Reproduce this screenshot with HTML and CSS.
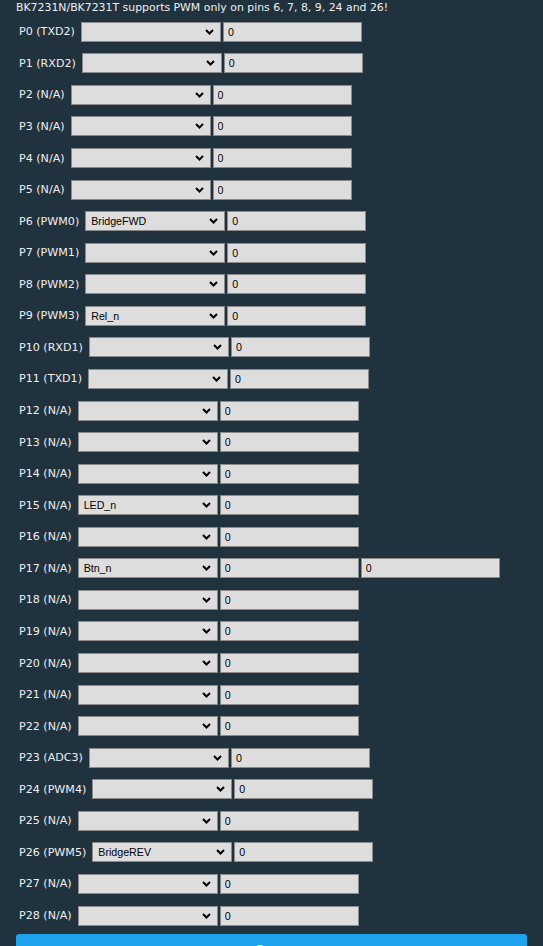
FILE: index.html
```html
<!DOCTYPE html>
<html>
<head>
<meta charset="utf-8">
<link rel="stylesheet" href="styles.css">
</head>
<body>
<div class="page">
  <div class="note">BK7231N/BK7231T supports PWM only on pins 6, 7, 8, 9, 24 and 26!</div>
  <div class="pins">
    <div class="row"><span class="lbl">P0 (TXD2)</span><select class="sel"><option></option></select><input class="inp" value="0"></div>
    <div class="row"><span class="lbl">P1 (RXD2)</span><select class="sel"><option></option></select><input class="inp" value="0"></div>
    <div class="row"><span class="lbl">P2 (N/A)</span><select class="sel"><option></option></select><input class="inp" value="0"></div>
    <div class="row"><span class="lbl">P3 (N/A)</span><select class="sel"><option></option></select><input class="inp" value="0"></div>
    <div class="row"><span class="lbl">P4 (N/A)</span><select class="sel"><option></option></select><input class="inp" value="0"></div>
    <div class="row"><span class="lbl">P5 (N/A)</span><select class="sel"><option></option></select><input class="inp" value="0"></div>
    <div class="row"><span class="lbl">P6 (PWM0)</span><select class="sel"><option>BridgeFWD</option></select><input class="inp" value="0"></div>
    <div class="row"><span class="lbl">P7 (PWM1)</span><select class="sel"><option></option></select><input class="inp" value="0"></div>
    <div class="row"><span class="lbl">P8 (PWM2)</span><select class="sel"><option></option></select><input class="inp" value="0"></div>
    <div class="row"><span class="lbl">P9 (PWM3)</span><select class="sel"><option>Rel_n</option></select><input class="inp" value="0"></div>
    <div class="row"><span class="lbl">P10 (RXD1)</span><select class="sel"><option></option></select><input class="inp" value="0"></div>
    <div class="row"><span class="lbl">P11 (TXD1)</span><select class="sel"><option></option></select><input class="inp" value="0"></div>
    <div class="row"><span class="lbl">P12 (N/A)</span><select class="sel"><option></option></select><input class="inp" value="0"></div>
    <div class="row"><span class="lbl">P13 (N/A)</span><select class="sel"><option></option></select><input class="inp" value="0"></div>
    <div class="row"><span class="lbl">P14 (N/A)</span><select class="sel"><option></option></select><input class="inp" value="0"></div>
    <div class="row"><span class="lbl">P15 (N/A)</span><select class="sel"><option>LED_n</option></select><input class="inp" value="0"></div>
    <div class="row"><span class="lbl">P16 (N/A)</span><select class="sel"><option></option></select><input class="inp" value="0"></div>
    <div class="row"><span class="lbl">P17 (N/A)</span><select class="sel"><option>Btn_n</option></select><input class="inp" value="0"><input class="inp" value="0"></div>
    <div class="row"><span class="lbl">P18 (N/A)</span><select class="sel"><option></option></select><input class="inp" value="0"></div>
    <div class="row"><span class="lbl">P19 (N/A)</span><select class="sel"><option></option></select><input class="inp" value="0"></div>
    <div class="row"><span class="lbl">P20 (N/A)</span><select class="sel"><option></option></select><input class="inp" value="0"></div>
    <div class="row"><span class="lbl">P21 (N/A)</span><select class="sel"><option></option></select><input class="inp" value="0"></div>
    <div class="row"><span class="lbl">P22 (N/A)</span><select class="sel"><option></option></select><input class="inp" value="0"></div>
    <div class="row"><span class="lbl">P23 (ADC3)</span><select class="sel"><option></option></select><input class="inp" value="0"></div>
    <div class="row"><span class="lbl">P24 (PWM4)</span><select class="sel"><option></option></select><input class="inp" value="0"></div>
    <div class="row"><span class="lbl">P25 (N/A)</span><select class="sel"><option></option></select><input class="inp" value="0"></div>
    <div class="row"><span class="lbl">P26 (PWM5)</span><select class="sel"><option>BridgeREV</option></select><input class="inp" value="0"></div>
    <div class="row"><span class="lbl">P27 (N/A)</span><select class="sel"><option></option></select><input class="inp" value="0"></div>
    <div class="row"><span class="lbl">P28 (N/A)</span><select class="sel"><option></option></select><input class="inp" value="0"></div>
  </div>
  <button class="save">Save</button>
</div>
</body>
</html>
```

FILE: styles.css
```css
html, body {
  margin: 0;
  padding: 0;
  background: #21323f;
}
body {
  font-family: "DejaVu Sans", Verdana, sans-serif;
  color: #eeeeee;
  overflow: hidden;
}
.page {
  padding: 0 16px;
}
.note {
  font-size: 10.9px;
  line-height: 16px;
  height: 16px;
  white-space: nowrap;
}
.pins {
  display: flex;
  flex-direction: column;
}
.row {
  display: flex;
  align-items: center;
  height: 31.57px;
  padding-left: 3px;
}
.lbl {
  font-size: 11.1px;
  margin-right: 6px;
  white-space: nowrap;
}
.sel {
  -webkit-appearance: none;
  appearance: none;
  box-sizing: border-box;
  width: 140px;
  height: 20px;
  margin: 0 2px 0 0;
  padding: 0 0 0 5px;
  border: 1px solid #8a8a8a;
  border-radius: 0;
  background-color: #dddddd;
  background-image: url("data:image/svg+xml;utf8,<svg xmlns='http://www.w3.org/2000/svg' width='9' height='6' viewBox='0 0 9 6'><path d='M1 1 L4.5 4.5 L8 1' fill='none' stroke='black' stroke-width='2'/></svg>");
  background-repeat: no-repeat;
  background-position: right 6px center;
  font-family: "Liberation Sans", Arial, sans-serif;
  font-size: 10.67px;
  color: #000;
}
.inp {
  box-sizing: border-box;
  width: 139px;
  height: 20px;
  margin: 0 2px 0 0;
  padding: 0 4px;
  border: 1px solid #8a8a8a;
  border-radius: 0;
  background: #dddddd;
  font-family: "Liberation Sans", Arial, sans-serif;
  font-size: 10.67px;
  color: #000;
  outline: none;
}
.save {
  display: block;
  box-sizing: border-box;
  width: 100%;
  height: 32px;
  margin-top: 3px;
  border: 0;
  border-radius: 3px;
  background: #1fa3ec;
  color: #fff;
  font-family: "DejaVu Sans", Verdana, sans-serif;
  font-size: 13px;
  line-height: 32px;
  padding: 0;
}
```
